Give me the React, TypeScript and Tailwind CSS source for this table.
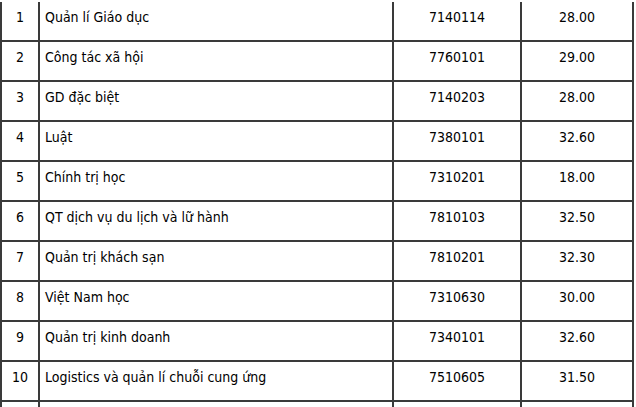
import React from "react";

const rows: [string, string, string, string][] = [
  ["1", "Quản lí Giáo dục", "7140114", "28.00"],
  ["2", "Công tác xã hội", "7760101", "29.00"],
  ["3", "GD đặc biệt", "7140203", "28.00"],
  ["4", "Luật", "7380101", "32.60"],
  ["5", "Chính trị học", "7310201", "18.00"],
  ["6", "QT dịch vụ du lịch và lữ hành", "7810103", "32.50"],
  ["7", "Quản trị khách sạn", "7810201", "32.30"],
  ["8", "Việt Nam học", "7310630", "30.00"],
  ["9", "Quản trị kinh doanh", "7340101", "32.60"],
  ["10", "Logistics và quản lí chuỗi cung ứng", "7510605", "31.50"],
  ["", "", "", ""],
];

export default function App() {
  return (
    <div
      className="h-[407px] w-[636px] overflow-hidden bg-white pt-[2px] text-[14px] leading-[20px] text-black"
      style={{ fontFamily: '"DejaVu Sans Condensed", "DejaVu Sans", Tahoma, sans-serif' }}
    >
      <div className="w-[634px]">
        {rows.map((r, i) => (
          <div key={i} className="flex h-[40px] border-b-2 border-[#3a3a3a]">
            <div className="w-[38px] shrink-0 border-l-2 border-[#3a3a3a] pt-[5px] text-center">{r[0]}</div>
            <div className="w-[354px] shrink-0 border-l-2 border-[#3a3a3a] pl-[5px] pt-[5px]">{r[1]}</div>
            <div className="w-[128px] shrink-0 border-l-2 border-[#3a3a3a] pt-[5px] text-center">{r[2]}</div>
            <div className="w-[114px] shrink-0 border-x-2 border-[#3a3a3a] pt-[5px] text-center">{r[3]}</div>
          </div>
        ))}
      </div>
    </div>
  );
}
